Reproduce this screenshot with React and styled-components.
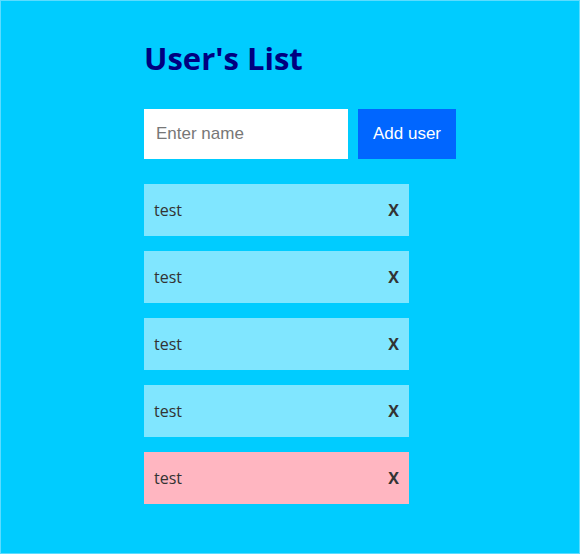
import styled, { createGlobalStyle } from "styled-components";

const GlobalStyle = createGlobalStyle`
  html, body {
    margin: 0;
    padding: 0;
  }
  body {
    font-family: "Open Sans", "Noto Sans", sans-serif;
  }
`;

const users = [
  { name: "test", flagged: false },
  { name: "test", flagged: false },
  { name: "test", flagged: false },
  { name: "test", flagged: false },
  { name: "test", flagged: true },
];

const App = () => {
  return (
    <Page>
      <GlobalStyle />
      <Main>
        <Title>User's List</Title>
        <Form onSubmit={(e) => e.preventDefault()}>
          <NameInput placeholder="Enter name" />
          <AddButton type="submit">Add user</AddButton>
        </Form>
        <List>
          {users.map((u, i) => (
            <Item key={i} $flagged={u.flagged}>
              <Name>{u.name}</Name>
              <Remove>X</Remove>
            </Item>
          ))}
        </List>
      </Main>
    </Page>
  );
};

const Page = styled.div`
  box-sizing: border-box;
  width: 580px;
  height: 554px;
  background: #00ccff;
  border: 1px solid #5cdcff;
  padding-top: 37px;
`;
const Main = styled.div`
  margin-left: 143px;
`;
const Title = styled.h1`
  margin: 0 0 31px;
  font-size: 31px;
  font-weight: 700;
  line-height: 40px;
  color: #000080;
`;
const Form = styled.form`
  display: flex;
  gap: 10px;
  margin-bottom: 25px;
`;
const NameInput = styled.input`
  box-sizing: border-box;
  width: 204px;
  height: 50px;
  border: none;
  outline: none;
  padding: 0 12px;
  font-family: "Liberation Sans", Arial, sans-serif;
  font-size: 17px;
  &::placeholder {
    color: #777;
  }
`;
const AddButton = styled.button`
  width: 98px;
  height: 50px;
  border: none;
  background: #0066ff;
  color: #fff;
  font-family: "Liberation Sans", Arial, sans-serif;
  font-size: 17px;
  cursor: pointer;
`;
const List = styled.ul`
  list-style: none;
  margin: 0;
  padding: 0;
  display: flex;
  flex-direction: column;
  gap: 15px;
`;
const Item = styled.li`
  box-sizing: border-box;
  width: 265px;
  height: 52px;
  display: flex;
  align-items: center;
  justify-content: space-between;
  padding: 0 10px;
  background: ${(p) => (p.$flagged ? "#ffb6c1" : "#80e6ff")};
  color: #333;
`;
const Name = styled.span`
  font-size: 16px;
`;
const Remove = styled.span`
  font-size: 16px;
  font-weight: 700;
  cursor: pointer;
`;

export default App;
